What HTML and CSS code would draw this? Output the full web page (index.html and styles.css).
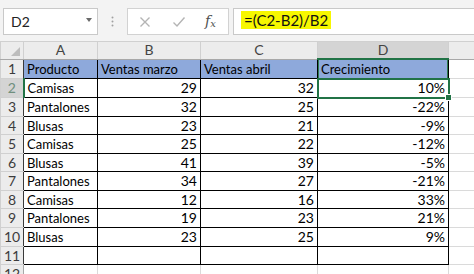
FILE: index.html
```html
<!DOCTYPE html>
<html lang="es">
<head>
  <meta charset="UTF-8">
  <title>Crecimiento de ventas</title>
  <link rel="stylesheet" href="styles.css">
</head>
<body>
  <div class="toolbar">
    <div class="name-box">
      <span>D2</span>
      <span class="caret"></span>
    </div>
    <div class="dots">
      <svg width="3" height="11" viewBox="0 0 3 11"><circle cx="1.5" cy="1.5" r="1" fill="#a0a0a0"/><circle cx="1.5" cy="5.5" r="1" fill="#a0a0a0"/><circle cx="1.5" cy="9.5" r="1" fill="#a0a0a0"/></svg>
    </div>
    <div class="buttons">
      <svg class="btn" width="12" height="12" viewBox="0 0 12 12"><path d="M1.5 1.5 L10.5 10.5 M10.5 1.5 L1.5 10.5" stroke="#b4b4b4" stroke-width="1.4" fill="none"/></svg>
      <svg class="btn" width="14" height="12" viewBox="0 0 14 12"><path d="M1.5 6.5 L5 10 L12.5 1.5" stroke="#b4b4b4" stroke-width="1.4" fill="none"/></svg>
      <span class="fx">f<sub>x</sub></span>
    </div>
    <div class="formula">
      <span class="mark">=(C2-B2)/B2</span>
    </div>
  </div>

  <table class="sheet">
    <colgroup>
      <col class="w-rh"><col class="w-a"><col class="w-b"><col class="w-c"><col class="w-d"><col class="w-e">
    </colgroup>
    <tr class="heads">
      <td class="corner"></td><td class="ch">A</td><td class="ch">B</td><td class="ch">C</td><td class="ch on">D</td><td class="ch"></td>
    </tr>
    <tr class="r19">
      <td class="rh in">1</td><td class="t top">Producto</td><td class="t top">Ventas marzo</td><td class="t top">Ventas abril</td><td class="t top d1">Crecimiento</td><td></td>
    </tr>
    <tr class="r19">
      <td class="rh in on">2</td><td class="t">Camisas</td><td class="t n">29</td><td class="t n">32</td><td class="t n sel">10%</td><td></td>
    </tr>
    <tr class="r19">
      <td class="rh in">3</td><td class="t">Pantalones</td><td class="t n">32</td><td class="t n">25</td><td class="t n">-22%</td><td></td>
    </tr>
    <tr class="r18">
      <td class="rh in">4</td><td class="t">Blusas</td><td class="t n">23</td><td class="t n">21</td><td class="t n">-9%</td><td></td>
    </tr>
    <tr class="r19">
      <td class="rh in">5</td><td class="t">Camisas</td><td class="t n">25</td><td class="t n">22</td><td class="t n">-12%</td><td></td>
    </tr>
    <tr class="r18">
      <td class="rh in">6</td><td class="t">Blusas</td><td class="t n">41</td><td class="t n">39</td><td class="t n">-5%</td><td></td>
    </tr>
    <tr class="r19">
      <td class="rh in">7</td><td class="t">Pantalones</td><td class="t n">34</td><td class="t n">27</td><td class="t n">-21%</td><td></td>
    </tr>
    <tr class="r18">
      <td class="rh in">8</td><td class="t">Camisas</td><td class="t n">12</td><td class="t n">16</td><td class="t n">33%</td><td></td>
    </tr>
    <tr class="r19">
      <td class="rh in">9</td><td class="t">Pantalones</td><td class="t n">19</td><td class="t n">23</td><td class="t n">21%</td><td></td>
    </tr>
    <tr class="r19">
      <td class="rh in">10</td><td class="t">Blusas</td><td class="t n">23</td><td class="t n">25</td><td class="t n">9%</td><td></td>
    </tr>
    <tr class="r18">
      <td class="rh in">11</td><td class="t"></td><td class="t"></td><td class="t"></td><td class="t"></td><td></td>
    </tr>
    <tr class="r19">
      <td class="rh">12</td><td></td><td></td><td></td><td></td><td></td>
    </tr>
  </table>
</body>
</html>
```

FILE: styles.css
```css
body { margin:0; background:#fff; overflow:hidden; font-family:Lato,"Liberation Sans",sans-serif; color:#000; }

/* formula bar */
.toolbar { display:flex; height:41px; box-sizing:border-box; padding:8px 0 6px 3px; background:#f3f3f3; overflow:hidden; }
.name-box { width:95px; box-sizing:border-box; display:flex; align-items:center; justify-content:space-between; padding:0 5px 0 7px; background:#fff; border:1px solid #c9c9c9; font-size:14px; color:#222; }
.caret { width:0; height:0; border-left:3.5px solid transparent; border-right:3.5px solid transparent; border-top:4px solid #6a6a6a; margin-top:-3px; }
.dots { width:29px; display:flex; align-items:center; padding-left:13px; box-sizing:border-box; }
.buttons { width:102px; box-sizing:border-box; display:flex; align-items:center; padding-left:11px; background:#fff; border:1px solid #d2d2d2; }
.btn { margin-right:21px; }
.buttons .btn + .btn { margin-right:19px; }
.fx { font-family:"DejaVu Serif","Liberation Serif",serif; font-style:italic; font-size:14px; color:#505050; line-height:1; }
.fx sub { font-size:10px; vertical-align:-1px; }
.formula { flex:1; margin-left:4px; margin-right:-2px; display:flex; align-items:center; padding-left:7px; background:#fff; border:1px solid #c9c9c9; }
.mark { background:#f7f700; font-size:15px; line-height:18px; padding:0 3px 0 3px; color:#111; margin-top:-4px; }

/* grid */
.sheet { border-collapse:collapse; table-layout:fixed; width:474px; font-size:13px; }
.w-rh { width:23px; } .w-a { width:74px; } .w-b { width:103px; } .w-c { width:117px; } .w-d { width:131px; } .w-e { width:26px; }
.sheet td { border:1px solid #dadada; padding:0 3px; white-space:nowrap; overflow:hidden; line-height:16px; }
.heads td { height:16px; background:#ececec; color:#444; text-align:center; border-color:#d0d0d0; border-bottom-color:#a8a8a8; padding:0; font-size:14px; }
.heads td.on { background:#d4d4d4; border-bottom:2px solid #217346; }
.corner { position:relative; }
.corner::after { content:""; position:absolute; right:3px; bottom:3px; width:0; height:0; border-left:9px solid transparent; border-bottom:9px solid #bdbdbd; }
.r19 td { height:18px; }
.r18 td { height:17px; }
.rh { background:#ececec; color:#3c3c3c; text-align:center; padding:0 !important; font-size:14px; border-color:#d0d0d0 !important; border-right-color:#a8a8a8 !important; }
.rh.in { border-right-color:#3a3a3a !important; }
.rh.on { background:#d4d4d4; color:#6f8f7d; border-right:2px solid #217346 !important; }
.sheet td.t { border-color:#000; }
.sheet td.top { background:#8ea9db; }
.n { text-align:right; font-size:14px; }
.d1 { box-shadow:inset 1px 0 #2e7d50, inset -1px 0 #2e7d50; }
.sel { position:relative; outline:2px solid #217346; outline-offset:-1px; overflow:visible !important; }
.sel::after { content:""; position:absolute; right:-4px; bottom:-4px; width:5px; height:5px; background:#217346; border:1px solid #fff; }
```
